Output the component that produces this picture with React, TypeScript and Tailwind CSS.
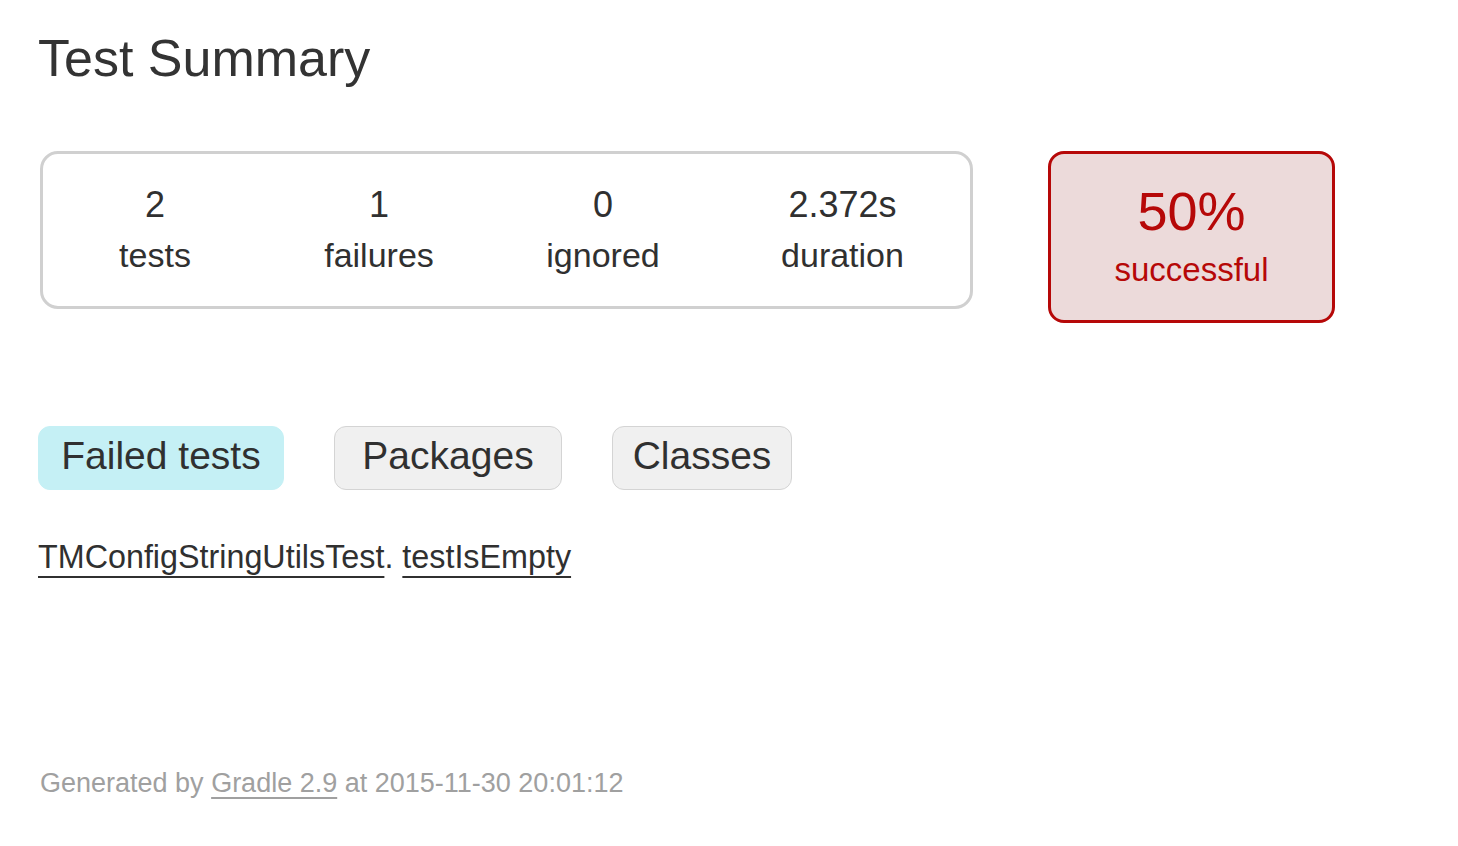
import React from "react";

const font = { fontFamily: '"Liberation Sans", Arial, sans-serif' };

function Info({ n, label, w }: { n: string; label: string; w: string }) {
  return (
    <div className={`${w} pt-[31px] pb-[31px] text-center`}>
      <div className="text-[36px] leading-[40px] mb-[10px]">{n}</div>
      <div className="text-[34px] leading-[40px]">{label}</div>
    </div>
  );
}

export default function App() {
  return (
    <div style={font} className="min-h-[846px] bg-white text-[#303030] pl-[38px] pt-[28px]">
      <h1 className="text-[52px] leading-[60px] font-normal text-[#333333]">Test Summary</h1>

      <div className="flex items-start mt-[63px]">
        <div className="ml-[2px] flex border-[3px] border-[#d0d0d0] rounded-[18px]">
          <Info n="2" label="tests" w="w-[224px]" />
          <Info n="1" label="failures" w="w-[224px]" />
          <Info n="0" label="ignored" w="w-[224px]" />
          <Info n="2.372s" label="duration" w="w-[255px]" />
        </div>
        <div className="ml-[75px] w-[287px] border-[3px] border-[#b60808] bg-[#ecdada] rounded-[16px] pt-[27px] pb-[30px] text-center text-[#b60808]">
          <div className="text-[54px] leading-[60px] mb-[9px]">50%</div>
          <div className="text-[33px] leading-[40px]">successful</div>
        </div>
      </div>

      <div className="flex mt-[103px] gap-[50px]">
        <div className="w-[246px] h-[64px] flex items-center justify-center pb-[3px] rounded-[12px] border border-[#c5f0f5] bg-[#c5f0f5] text-[39px]">
          Failed tests
        </div>
        <div className="w-[228px] h-[64px] flex items-center justify-center pb-[3px] rounded-[12px] border border-[#d4d4d4] bg-[#f0f0f0] text-[39px]">
          Packages
        </div>
        <div className="w-[180px] h-[64px] flex items-center justify-center pb-[3px] rounded-[12px] border border-[#d4d4d4] bg-[#f0f0f0] text-[39px]">
          Classes
        </div>
      </div>

      <div className="mt-[47px] text-[32.3px] leading-[40px]">
        <a className="underline decoration-[2px] underline-offset-[8px] text-[#303030]">TMConfigStringUtilsTest</a>
        <span>. </span>
        <a className="underline decoration-[2px] underline-offset-[8px] text-[#303030]">testIsEmpty</a>
      </div>

      <div className="mt-[190px] ml-[2px] text-[27px] leading-[32px] text-[#a0a0a0] whitespace-nowrap">
        Generated by{" "}
        <a className="underline decoration-[2px] underline-offset-[5px] text-[#a0a0a0]">Gradle 2.9</a>{" "}
        at 2015-11-30 20:01:12
      </div>
    </div>
  );
}
